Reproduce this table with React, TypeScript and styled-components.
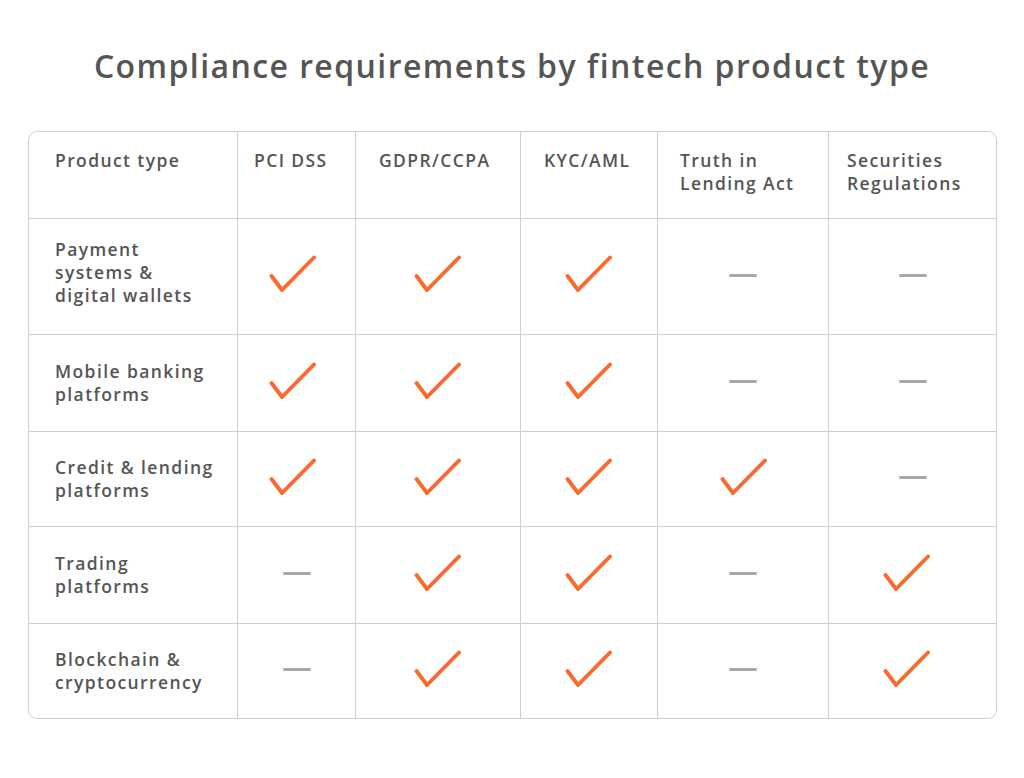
import React from "react";
import styled, { createGlobalStyle } from "styled-components";

const Global = createGlobalStyle`
  html, body { margin: 0; padding: 0; background: #ffffff; }
  body { font-family: "Open Sans", "Noto Sans", sans-serif; }
`;

const Page = styled.div`
  width: 1024px;
  height: 778px;
  box-sizing: border-box;
  padding-top: 42px;
  display: flex;
  flex-direction: column;
  align-items: center;
`;

const Title = styled.h1`
  margin: 0;
  height: 48px;
  font-family: "Open Sans", sans-serif;
  font-weight: 600;
  font-size: 32px;
  line-height: 48px;
  color: #555555;
  letter-spacing: 1.42px;
`;

const Table = styled.div`
  margin-top: 41px;
  width: 969px;
  box-sizing: border-box;
  border: 1px solid #cfcfcf;
  border-radius: 9px;
  overflow: hidden;
  display: grid;
  grid-template-columns: 209px 118px 165px 137px 171px 1fr;
  grid-template-rows: 87px 116px 97px 95px 97px 1fr;
  height: 588px;
  align-self: flex-start;
  margin-left: 28px;
`;

const Cell = styled.div<{ $last: boolean; $top: boolean; $pl: number; $head: boolean; $center: boolean; $lift: number }>`
  box-sizing: border-box;
  border-right: ${(p) => (p.$last ? "none" : "1px solid #cfcfcf")};
  border-bottom: ${(p) => (p.$top ? "1px solid #cfcfcf" : "none")};
  padding-left: ${(p) => (p.$center ? 0 : p.$pl)}px;
  padding-top: ${(p) => (p.$head ? "17px" : "0")};
  padding-bottom: ${(p) => p.$lift}px;
  display: flex;
  align-items: ${(p) => (p.$head ? "flex-start" : "center")};
  justify-content: ${(p) => (p.$center ? "center" : "flex-start")};
  font-family: "Open Sans", sans-serif;
  font-weight: 600;
  font-size: 17.5px;
  line-height: 23px;
  letter-spacing: 1.4px;
  color: #555555;
`;

const Label = styled.span`
  display: block;
  white-space: pre-line;
`;

const Mark = styled.svg<{ $shift: number }>`
  display: block;
  margin-top: -5px;
  transform: translateX(${(p) => p.$shift}px);
`;

const Dash = styled.span`
  display: block;
  width: 28px;
  height: 3px;
  border-radius: 2px;
  background: #a9a9a9;
  margin-top: -3px;
`;

const Check = ({ shift }: { shift: number }) => (
  <Mark width="48" height="38" viewBox="0 0 48 38" $shift={shift}>
    <path
      d="M2.5 21 L13 35 L45 2.5"
      fill="none"
      stroke="#F86A2E"
      strokeWidth="3.9"
      strokeLinecap="round"
      strokeLinejoin="round"
    />
  </Mark>
);

const headers = [
  "Product type",
  "PCI DSS",
  "GDPR/CCPA",
  "KYC/AML",
  "Truth in\nLending Act",
  "Securities\nRegulations",
];
const pads = [26, 16, 23, 23, 22, 18];
const checkShift = [-4, 0, 0, 1, -6];

const rows: { name: string; v: boolean[]; lift: number }[] = [
  { name: "Payment\nsystems &\ndigital wallets", v: [true, true, true, false, false], lift: 8 },
  { name: "Mobile banking\nplatforms", v: [true, true, true, false, false], lift: 0 },
  { name: "Credit & lending\nplatforms", v: [true, true, true, true, false], lift: 0 },
  { name: "Trading\nplatforms", v: [false, true, true, false, true], lift: 0 },
  { name: "Blockchain &\ncryptocurrency", v: [false, true, true, false, true], lift: 0 },
];

export default function App() {
  return (
    <>
      <Global />
      <Page>
        <Title>Compliance requirements by fintech product type</Title>
        <Table>
          {headers.map((h, i) => (
            <Cell key={"h" + i} $last={i === 5} $top $pl={pads[i]} $head $center={false} $lift={0}>
              <Label>{h}</Label>
            </Cell>
          ))}
          {rows.map((r, ri) => (
            <React.Fragment key={ri}>
              <Cell $last={false} $top={ri < rows.length - 1} $pl={26} $head={false} $center={false} $lift={r.lift}>
                <Label>{r.name}</Label>
              </Cell>
              {r.v.map((on, ci) => (
                <Cell
                  key={ci}
                  $last={ci === 4}
                  $top={ri < rows.length - 1}
                  $pl={0}
                  $head={false}
                  $center
                  $lift={0}
                >
                  {on ? <Check shift={checkShift[ci]} /> : <Dash />}
                </Cell>
              ))}
            </React.Fragment>
          ))}
        </Table>
      </Page>
    </>
  );
}
